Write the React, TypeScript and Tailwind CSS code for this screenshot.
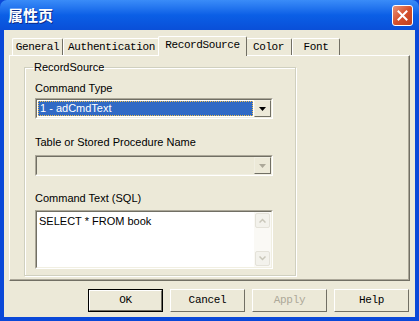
import { ReactNode } from 'react';

const tabs = [
  { label: 'General', w: 'w-[51px]' },
  { label: 'Authentication', w: 'w-[97px]' },
  { label: 'RecordSource', w: 'w-[85px]', active: true },
  { label: 'Color', w: 'w-[47px]' },
  { label: 'Font', w: 'w-[48px]' },
];

const mono = { fontFamily: '"Liberation Mono", "DejaVu Sans Mono", monospace' };
const sans = { fontFamily: 'Tahoma, "Liberation Sans", Arial, sans-serif' };

function Sunken({ children, className = '' }: { children: ReactNode; className?: string }) {
  return (
    <div className={`border border-t-[#ACA899] border-l-[#ACA899] border-r-white border-b-white ${className}`}>
      <div className="flex h-full border border-t-[#716F64] border-l-[#716F64] border-r-[#F1EFE2] border-b-[#F1EFE2]">
        {children}
      </div>
    </div>
  );
}

function DropButton({ disabled }: { disabled?: boolean }) {
  return (
    <div className="flex w-[17px] items-center justify-center border border-t-[#F1EFE2] border-l-[#F1EFE2] border-r-[#716F64] border-b-[#716F64] bg-[#ECE9D8]">
      <svg width="7" height="4" viewBox="0 0 7 4">
        <path d="M0 0h7L3.5 4z" fill={disabled ? '#ACA899' : '#000'} />
      </svg>
    </div>
  );
}

function ScrollArrow({ up }: { up?: boolean }) {
  return (
    <div className="flex h-[15px] w-[15px] items-center justify-center rounded-[2px] border border-[#E4E2D9] bg-[#F3F2EC]">
      <svg width="7" height="5" viewBox="0 0 7 5">
        <path d={up ? 'M0.5 4.5L3.5 1.5L6.5 4.5' : 'M0.5 0.5L3.5 3.5L6.5 0.5'} stroke="#C9C7BA" strokeWidth="1.5" fill="none" />
      </svg>
    </div>
  );
}

function Button({ label, def, disabled }: { label: string; def?: boolean; disabled?: boolean }) {
  return (
    <div
      className={`flex h-[23px] w-[75px] items-center justify-center text-[11px] tracking-[-0.3px] ${
        def ? 'border border-black' : 'border border-t-white border-l-white border-r-[#716F64] border-b-[#716F64]'
      } ${disabled ? 'text-[#ACA899]' : 'text-black'} bg-[#ECE9D8]`}
      style={mono}
    >
      {def ? (
        <div className="flex h-full w-full items-center justify-center border border-t-white border-l-white border-r-[#716F64] border-b-[#716F64]">
          {label}
        </div>
      ) : (
        label
      )}
    </div>
  );
}

export default function App() {
  return (
    <div className="flex h-[321px] w-[419px] flex-col overflow-hidden bg-[#0A48D8]">
      {/* Title bar */}
      <div className="flex h-[30px] shrink-0 items-center justify-between rounded-t-[7px] bg-gradient-to-b from-[#3A8CF8] via-[#0B5FE6] to-[#0A4FD8] pl-[8px] pr-[6px]">
        <span
          className="text-[15px] font-bold text-white [text-shadow:1px_1px_0_#0A2A8A]"
          style={{ fontFamily: '"Noto Sans CJK SC", sans-serif' }}
        >
          属性页
        </span>
        <div className="flex h-[21px] w-[21px] items-center justify-center rounded-[3px] border border-white bg-gradient-to-br from-[#E89378] via-[#D5502B] to-[#C0401F]">
          <svg width="11" height="11" viewBox="0 0 11 11">
            <path d="M1.5 1.5L9.5 9.5M9.5 1.5L1.5 9.5" stroke="#fff" strokeWidth="2" strokeLinecap="square" />
          </svg>
        </div>
      </div>

      {/* Client area */}
      <div className="mx-[4px] mb-[4px] flex flex-1 flex-col bg-[#ECE9D8] pl-[5px] pr-[5px] pt-[6px]">
        {/* Tabs */}
        <div className="flex h-[19px] items-end pl-[3px]">
          {tabs.map((t) =>
            t.active ? (
              <div
                key={t.label}
                className="relative z-10 -mx-[2px] -mb-px flex h-[20px] w-[89px] items-center justify-center rounded-t-[2px] border border-b-0 border-l-white border-t-white border-r-[#716F64] bg-[#ECE9D8] pb-[2px] text-[11px] tracking-[-0.4px] text-black"
                style={mono}
              >
                {t.label}
              </div>
            ) : (
              <div
                key={t.label}
                className={`flex h-[17px] ${t.w} items-center justify-center rounded-t-[2px] border border-b-0 border-l-white border-t-white border-r-[#716F64] text-[11px] tracking-[-0.4px] text-black`}
                style={mono}
              >
                {t.label}
              </div>
            ),
          )}
        </div>

        {/* Tab panel */}
        <div className="h-[226px] border border-l-white border-t-white border-r-[#716F64] border-b-[#716F64]">
          <div className="h-full border-r border-b border-[#ACA899] pl-[14px] pt-[5px]">
            {/* Group box */}
            <fieldset className="h-[215px] w-[272px] border border-[#D0D0BF] px-[10px] pt-0 shadow-[inset_1px_1px_0_white,1px_1px_0_white]">
              <legend className="ml-[-2px] px-[1px] text-[11px] leading-[13px] text-black" style={sans}>
                RecordSource
              </legend>
              <div className="flex flex-col" style={sans}>
                <div className="mt-[8px] text-[11px] leading-[13px] text-black">Command Type</div>
                <Sunken className="mt-[3px] h-[21px] w-[238px] bg-white">
                  <div className="flex flex-1 p-[1px]">
                    <div className="flex flex-1 items-center border border-dotted border-[#F0C050] bg-[#316AC5] pl-[1px] text-[11px] text-white">
                      1 - adCmdText
                    </div>
                  </div>
                  <DropButton />
                </Sunken>
                <div className="mt-[17px] text-[11px] leading-[13px] text-black">Table or Stored Procedure Name</div>
                <Sunken className="mt-[6px] h-[21px] w-[238px] bg-[#ECE9D8]">
                  <div className="flex-1" />
                  <DropButton disabled />
                </Sunken>
                <div className="mt-[16px] text-[11px] leading-[13px] text-black">Command Text (SQL)</div>
                <Sunken className="mt-[5px] h-[59px] w-[238px] bg-white">
                  <div className="flex-1 bg-white pl-[2px] pt-[3px] text-[11px] leading-[13px] text-black">
                    SELECT * FROM book
                  </div>
                  <div className="flex w-[17px] flex-col justify-between bg-[#FAF9F5] p-[1px]">
                    <ScrollArrow up />
                    <ScrollArrow />
                  </div>
                </Sunken>
              </div>
            </fieldset>
          </div>
        </div>

        {/* Buttons */}
        <div className="mt-[8px] flex justify-end gap-[7px] pr-[1px]">
          <Button label="OK" def />
          <Button label="Cancel" />
          <Button label="Apply" disabled />
          <Button label="Help" />
        </div>
      </div>
    </div>
  );
}
